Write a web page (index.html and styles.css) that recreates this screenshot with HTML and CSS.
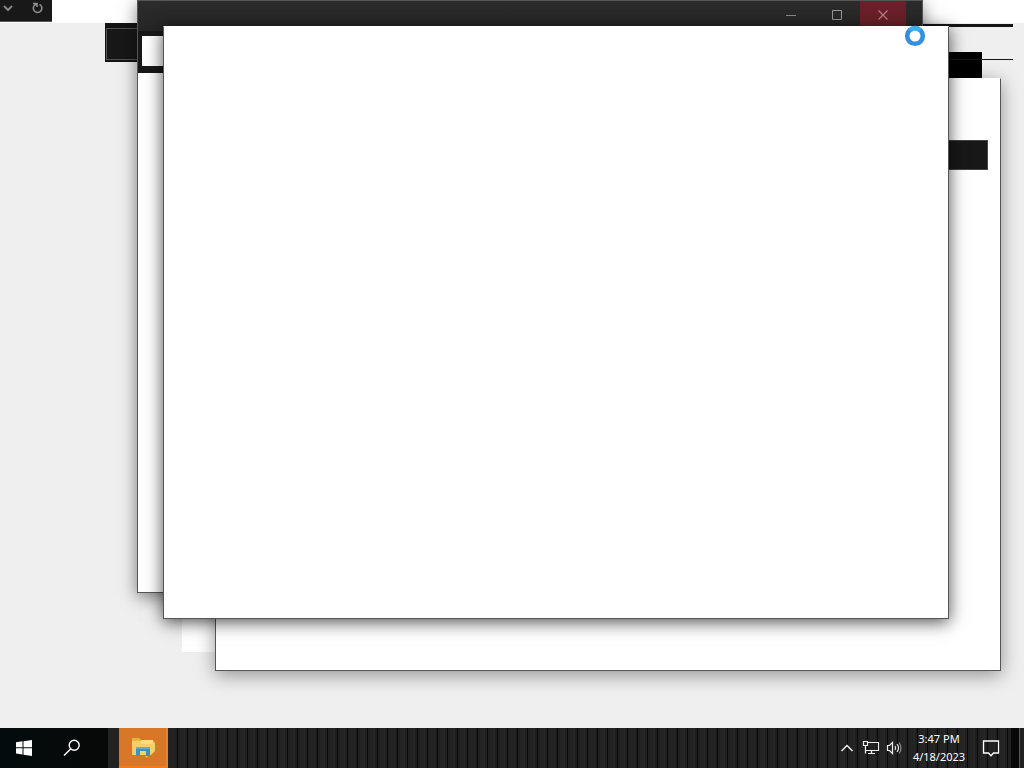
FILE: index.html
```html
<!DOCTYPE html>
<html lang="en">
<head>
<meta charset="utf-8">
<title>Desktop</title>
<link rel="stylesheet" href="styles.css">
</head>
<body>
<main class="desktop">
  <div class="strip"></div>
  <div class="toolbar">
    <button class="tool" aria-label="Expand"><svg width="10" height="8" viewBox="0 0 10 8"><path d="M1 2l4 4 4-4" fill="none" stroke="#858585" stroke-width="2"/></svg></button>
    <button class="tool" aria-label="Refresh"><svg width="12" height="14" viewBox="0 0 12 14"><path d="M1 2.500h4v3.500M4.500 3A4.300 4.300 0 1 0 9 4.500L7.500 3.300" fill="none" stroke="#8d8d8d" stroke-width="1.600"/></svg></button>
  </div>
  <div class="tab-fragment"></div>
  <div class="rule rule-thick"></div>
  <div class="black-fragment"></div>
  <div class="white-fragment"></div>
  <section class="window window-back"><div class="field-fragment"></div></section>
  <div class="rule rule-thin"></div>
  <section class="window window-middle">
    <header class="titlebar">
      <button class="caption" aria-label="Minimize"><svg width="12" height="12" viewBox="0 0 12 12"><path d="M1 6.500h10" stroke="#8b8b8b"/></svg></button>
      <button class="caption" aria-label="Maximize"><svg width="12" height="12" viewBox="0 0 12 12"><path d="M1.500 1.500h9v9h-9z" fill="none" stroke="#999"/></svg></button>
      <button class="caption close" aria-label="Close"><svg width="12" height="12" viewBox="0 0 12 12"><path d="M1.500 1.500l9 9M10.500 1.500l-9 9" stroke="#b48186" stroke-width="1.200"/></svg></button>
    </header>
    <div class="address"></div>
  </section>
  <section class="window window-front"></section>
  <svg class="cursor" width="22" height="22" viewBox="0 0 22 22"><circle cx="11" cy="11" r="7.800" fill="#fff" stroke="#348fe0" stroke-width="4.600"/><path d="M5.600 5.300A7.800 7.800 0 0 1 16.400 5.300" fill="none" stroke="#3daeee" stroke-width="4.600"/></svg>
</main>
<footer class="taskbar">
  <div class="launch">
    <button class="task" aria-label="Start"><svg width="18" height="18" viewBox="0 0 18 18"><path fill="#fff" d="M1 3.300l6.500-1v6H1zM8.500 2.200L17 1v7.300H8.500zM1 9.300h6.500v6.200L1 14.600zM8.500 9.300H17V17l-8.500-1.300z"/></svg></button>
    <button class="task" aria-label="Search"><svg width="18" height="18" viewBox="0 0 18 18"><g fill="none" stroke="#fff" stroke-width="1.400"><circle cx="11.200" cy="6.200" r="5"/><path d="M7.600 9.900L1 16.500"/></g></svg></button>
  </div>
  <button class="explorer" aria-label="File Explorer"><svg width="26" height="22" viewBox="0 0 26 22"><path fill="#e5b53f" d="M2 1h7l2 2h12v4H2z"/><path fill="#f3cf6b" d="M2 4h21l2 2v8l-4 4H2z"/><path fill="#f8dc7d" d="M11 3h12v4H11z"/><path fill="#3f92bd" d="M6 10h14v9h-4v-5h-6v5H6z"/><path fill="#62adcb" d="M6 10h14v2H6z"/><path fill="#e8b63d" d="M15 19h4l-3 2z"/></svg></button>
  <div class="tray">
    <button class="tray-icon" aria-label="Show hidden icons"><svg width="14" height="14" viewBox="0 0 14 14"><path d="M1.500 10L7 4.500l5.500 5.500" fill="none" stroke="#eee" stroke-width="1.500"/></svg></button>
    <button class="tray-icon" aria-label="Network"><svg width="18" height="16" viewBox="0 0 18 16"><g fill="none" stroke="#eee" stroke-width="1.200"><path d="M5.500 2.500h11v8h-13V6.500M1.500 1.500h4v4h-4zM3.500 5.500v8M9.500 10.500v3M6 13.500h7"/></g></svg></button>
    <button class="tray-icon volume" aria-label="Volume"><svg width="18" height="16" viewBox="0 0 18 16"><g fill="none" stroke="#eee" stroke-width="1.200"><path d="M2.500 5.500h2l3-3v11l-3-3h-2z"/><path d="M10 6q1.500 2 0 4M12 4q3 4 0 8"/><path stroke="#8b8b8b" d="M14 2.500q4 5.500 0 11"/></g></svg></button>
    <time class="clock" datetime="2023-04-18T15:47"><span>3:47 PM</span><span>4/18/2023</span></time>
    <button class="notify" aria-label="Notifications"><svg width="18" height="18" viewBox="0 0 18 18"><path d="M1.500 2h15v12h-5l-2.500 2.700L6.500 14h-5z" fill="none" stroke="#fff" stroke-width="1.300"/></svg></button>
    <button class="show-desktop" aria-label="Show desktop"></button>
  </div>
</footer>
</body>
</html>
```
FILE: styles.css
```css
* { box-sizing: border-box; }
body {
  margin: 0;
  height: 100vh;
  display: flex;
  flex-direction: column;
  background: #efefef;
  font: 11px/18px "Noto Sans", "Open Sans", sans-serif;
  overflow: hidden;
}
button {
  display: flex;
  align-items: center;
  justify-content: center;
  padding: 0;
  border: 0;
  background: none;
  color: inherit;
}
svg { display: block; flex: none; }
.desktop { position: relative; flex: 1; overflow: hidden; }
.strip { height: 23px; background: #fff; }
.toolbar {
  position: absolute;
  left: 0;
  top: 0;
  display: flex;
  gap: 19px;
  width: 52px;
  height: 22px;
  padding: 0 8px 6px 3px;
  border-bottom: 1px solid #555;
  background: #181818;
}
.tab-fragment {
  position: absolute;
  left: 105px;
  top: 23px;
  width: 60px;
  height: 39px;
  border: solid #141414;
  border-width: 5px 1px 4px;
  background: #181818;
}
.tab-fragment::before {
  content: "";
  display: block;
  height: 100%;
  border: 1px solid #545454;
}
.rule { position: absolute; left: 900px; right: 11px; background: #151515; }
.rule-thick { top: 24px; height: 3px; }
.rule-thin { top: 59px; height: 1px; }
.black-fragment { position: absolute; left: 900px; top: 52px; width: 82px; height: 28px; background: #000; }
.white-fragment { position: absolute; left: 182px; top: 600px; width: 60px; height: 52px; background: #fff; }
.window {
  position: absolute;
  width: 786px;
  height: 593px;
  border: 1px solid #555;
  background: #fff;
  box-shadow: 0 4px 16px rgba(0, 0, 0, .5);
}
.window-back { left: 215px; top: 78px; border-top-color: #fff; box-shadow: 0 4px 18px rgba(0, 0, 0, .4); }
.window-middle { left: 137px; top: 0; }
.window-front { left: 163px; top: 26px; border-top-color: #fff; box-shadow: 0 3px 16px rgba(0, 0, 0, .7); }
.field-fragment {
  width: 90px;
  height: 30px;
  margin: 61px 12px 0 auto;
  border: 1px solid #444;
  background: #181818;
}
.titlebar {
  display: flex;
  justify-content: flex-end;
  height: 30px;
  padding-right: 16px;
  background: linear-gradient(#2c2c2c, #252525);
}
.caption { width: 46px; height: 28px; }
.close { background: #6a2028; }
.address { height: 42px; border: solid #181818; border-width: 5px 4px 7px; }
.cursor { position: absolute; left: 904px; top: 25px; }
.taskbar {
  display: flex;
  flex: none;
  height: 40px;
  color: #fff;
  background:
    linear-gradient(90deg, #222 0 175px, transparent 175px),
    repeating-linear-gradient(90deg, #232323 0 4px, #282828 4px 5px, #1f1f1f 5px 7px, #0a0a0a 7px 8px, #202020 8px 10px);
}
.launch { display: flex; width: 108px; background: linear-gradient(90deg, #020c0c, #080808); }
.task { width: 48px; }
.explorer {
  width: 49px;
  margin-left: 11px;
  border-right: 2px solid #e88228;
  background: linear-gradient(#d97728 94%, #f77a14 94%);
}
.tray { display: flex; margin-left: auto; }
.tray-icon { width: 24px; }
.volume { width: 22px; }
.clock {
  display: flex;
  flex-direction: column;
  justify-content: center;
  align-items: center;
  width: 66px;
  padding-left: 2px;
}
.notify { width: 40px; }
.show-desktop { width: 13px; border-left: 8px solid #080808; background: linear-gradient(90deg, #555 1px, #222 1px); }
```
